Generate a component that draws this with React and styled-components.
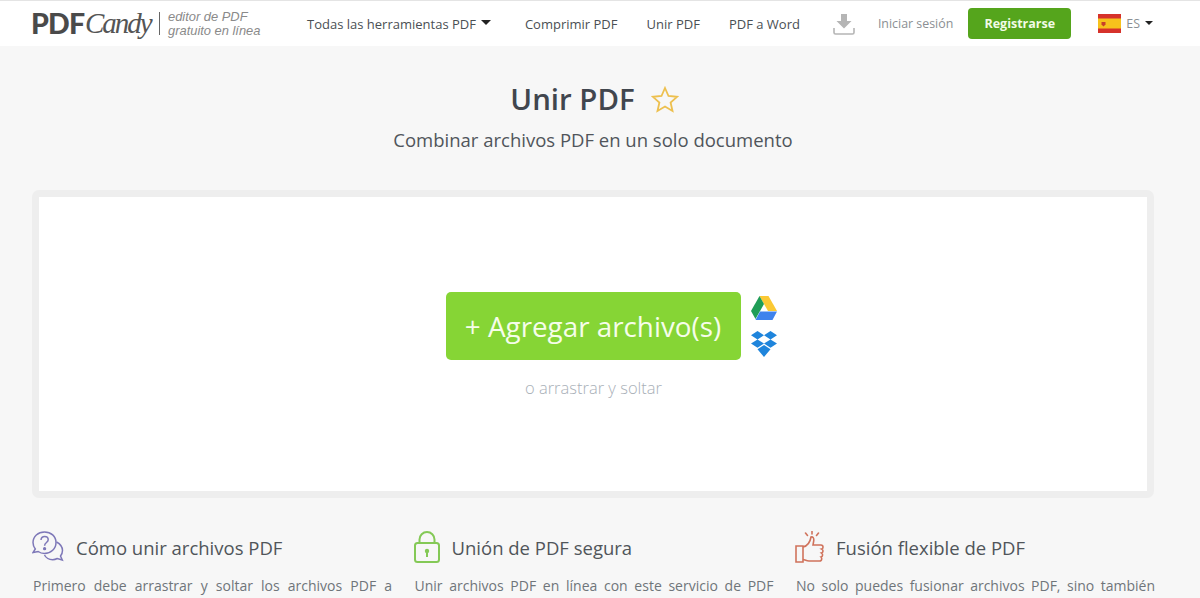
import React from "react";
import styled, { createGlobalStyle } from "styled-components";

const Global = createGlobalStyle`
  html, body { margin: 0; padding: 0; height: 598px; overflow: hidden; background: #f7f7f7; }
  body { font-family: "Open Sans", "Noto Sans", sans-serif; color: #444a50; }
`;
const Page = styled.div`width: 1200px; height: 598px; overflow: hidden;`;
const Header = styled.header`
  height: 46px; box-sizing: border-box; background: #fff; border-top: 1px solid #e4e4e4;
  display: flex; align-items: center; padding-left: 31px;
`;
const Logo = styled.div`display: flex; align-items: center; width: 276px; flex: none;`;
const LogoPdf = styled.span`font: 900 28.500px/1 Lato, sans-serif; color: #4a4a4a; letter-spacing: -0.8px; width: 53px;`;
const LogoCandy = styled.span`font: italic 400 29px/1 "Liberation Serif", serif; color: #555; width: 67px; letter-spacing: -2px; margin-left: 1px;`;
const LogoSep = styled.span`width: 1px; height: 23px; background: #666; margin: 0 8px 0 7px;`;
const Tagline = styled.div`font: italic 12.900px/13.500px "Liberation Sans", sans-serif; color: #8a8a8a; white-space: nowrap;`;
const NavLink = styled.a`
  font-size: ${p => p.$muted ? 12.4 : 13}px; color: ${p => p.$muted ? "#8b8f93" : "#4a4f54"}; white-space: nowrap;
  margin-left: ${p => p.$gap}px; display: flex; align-items: center;
`;
const Caret = styled.i`
  display: inline-block; width: 0; height: 0; margin-left: 5px; margin-top: -2px;
  border-left: ${p => p.$s}px solid transparent; border-right: ${p => p.$s}px solid transparent;
  border-top: ${p => p.$s}px solid #222;
`;
const IconSlot = styled.span`display: flex; margin-left: ${p => p.$gap}px;`;
const Register = styled.a`
  margin-left: 15px; width: 103px; height: 31px; border-radius: 4px; background: #55a51c; color: #f2fbe6;
  font-size: 12.5px; font-weight: 700; display: flex; align-items: center; justify-content: center;
`;
const Main = styled.main`padding: 0 46px 0 32px; width: 1122px;`;
const TitleRow = styled.div`
  display: flex; justify-content: center; align-items: center; gap: 16px; padding: 30px 0 0 3px;
`;
const Title = styled.h1`margin: 0; font-size: 29.400px; line-height: 46px; font-weight: 600; color: #41464e;`;
const Subtitle = styled.p`margin: 6px 0 0; text-align: center; font-size: 18.500px; line-height: 24px; color: #50555b;`;
const Drop = styled.section`
  margin-top: 38px; border: 7px solid #eeeeee; border-radius: 7px; background: #fff;
  display: flex; flex-direction: column; align-items: center; padding-top: 95px; height: 199px;
`;
const ButtonRow = styled.div`display: flex; align-items: center; gap: 10px; margin-left: 36px;`;
const AddButton = styled.button`
  width: 295px; height: 68px; border: 0; border-radius: 5px; background: #86d535; color: #f6fdea;
  font: 400 27.800px "Open Sans", sans-serif; padding: 0;
`;
const Clouds = styled.div`display: flex; flex-direction: column; gap: 11px; width: 26px;`;
const Hint = styled.div`margin-top: 17px; font-size: 16.500px; font-weight: 300; line-height: 22px; color: #a9b0b8; margin-left: 1px;`;
const Columns = styled.div`display: grid; grid-template-columns: 360px 360px 360px; column-gap: 21.500px; margin-top: 31px;`;
const ColHead = styled.div`display: flex; align-items: center; height: 36px;`;
const ColIcon = styled.span`display: flex; width: ${p => p.$w}px; flex: none;`;
const ColTitle = styled.h2`margin: 0; font-size: 18.500px; font-weight: 400; color: #50555a; white-space: nowrap;`;
const ColText = styled.p`
  margin: 10px 0 0; padding-left: 1px; font-size: 14px; line-height: 22px; color: #6f757a; text-align: justify; text-align-last: justify;
`;

const Download = () => (
  <svg width="22" height="22" viewBox="0 0 22 22">
    <path d="M8 1h6v7h4.500L11 15.500 3.500 8H8z" fill="#b5b5b5" />
    <path d="M1 15v4.500a1.500 1.500 0 0 0 1.500 1.500h17a1.500 1.500 0 0 0 1.500-1.500V15" fill="none" stroke="#b5b5b5" strokeWidth="1.600" />
  </svg>
);
const Flag = () => (
  <svg width="23" height="19" viewBox="0 0 23 19">
    <rect width="23" height="19" fill="#d6322b" />
    <rect y="4.500" width="23" height="10" fill="#f7c21c" />
    <path d="M3.500 8h4v2.500l-2 2-2-2z" fill="#c8402a" />
  </svg>
);
const Star = () => (
  <svg width="28" height="27" viewBox="0 0 28 27">
    <path d="M14 2l3.500 8 8.500.8-6.400 5.700 1.900 8.500L14 20.500 6.500 25l1.900-8.500L2 10.800l8.500-.8z" fill="none" stroke="#edc04f" strokeWidth="1.800" strokeLinejoin="miter" />
  </svg>
);
const Drive = () => (
  <svg width="26" height="24" viewBox="0 0 26 24" style={{ display: "block" }}>
    <path d="M8.500 0h9l8.500 15h-9z" fill="#fbc934" />
    <path d="M8.500 0L0 15l4.500 8L13 8z" fill="#1f9d57" />
    <path d="M4.500 24h17l4.500-8.500H9z" fill="#3f83ed" />
  </svg>
);
const Dropbox = () => (
  <svg width="26" height="26" viewBox="0.500 0 26 26" style={{ display: "block" }}>
    <path d="M7 0l6.500 4.200L7 8.400.5 4.200zM20 0l6.500 4.200L20 8.400l-6.500-4.200zM.5 12.600L7 8.400l6.500 4.200L7 16.800zM20 8.400l6.500 4.200L20 16.800l-6.500-4.200zM7 18.300l6.500-4.200 6.500 4.200-6.500 7.700z" fill="#1f85dc" />
  </svg>
);
const Question = () => (
  <svg width="32" height="32" viewBox="0 0 32 32" fill="none" stroke="#7e78b8" strokeWidth="1.500">
    <path d="M12.500 1C6 1 1 5.500 1 11.500c0 2.500 1 4.800 2.300 6.500L1 21.500l5.200-1c1.800 1.300 4 2 6.300 2 6.500 0 11.500-4.800 11.500-11S19 1 12.500 1z" />
    <path d="M24.500 11c3.800 2 6 5 6 8.500 0 2.200-.8 4-2 5.500l1.800 4-5-1.500c-1.500.8-3 1.200-4.700 1.200-3.500 0-6.500-1.700-8.100-4.700" />
    <path d="M9 9c.2-2.200 1.700-3.500 3.700-3.500s3.500 1.300 3.500 3.200c0 2.800-3.600 2.800-3.600 6" />
    <circle cx="12.600" cy="17.700" r=".9" fill="#7e78b8" />
  </svg>
);
const Lock = () => (
  <svg width="26" height="32" viewBox="0 0 26 32" fill="none" stroke="#84c956" strokeWidth="2">
    <rect x="1" y="12" width="24" height="19" rx="2.500" />
    <path d="M5.500 12V8.500a7.500 7.500 0 0 1 15 0V12" />
    <circle cx="13" cy="20" r="2.200" fill="#84c956" stroke="none" />
    <rect x="12" y="20" width="2" height="6" fill="#84c956" stroke="none" />
  </svg>
);
const Thumb = () => (
  <svg width="29" height="32" viewBox="0 0 29 32" fill="none" stroke="#d0735c" strokeWidth="1.600">
    <path d="M1 15h7v16H1z" />
    <path d="M8 16c4-1 7-4 8-10 2-.5 3 1 2.800 3.500L18 14h8a2 2 0 0 1 2 2.200c0 1-.6 1.600-1.400 1.800.8.400 1.400 1 1.400 2s-.6 1.800-1.500 2c.7.500 1.100 1.100 1.100 2s-.7 1.800-1.600 2c.5.500.7 1 .7 1.700 0 1.300-1 2.300-2.200 2.300H14c-2 0-4-1-6-1.500" />
    <path d="M17 0v3M10.500 2l2 2.500M23.500 2l-2 2.500" strokeLinecap="round" />
  </svg>
);

const features = [
  { w: 44, icon: <Question />, title: "Cómo unir archivos PDF", text: "Primero debe arrastrar y soltar los archivos PDF a" },
  { w: 38, icon: <Lock />, title: "Unión de PDF segura", text: "Unir archivos PDF en línea con este servicio de PDF" },
  { w: 41, icon: <Thumb />, title: "Fusión flexible de PDF", text: "No solo puedes fusionar archivos PDF, sino también" },
];

export default function App() {
  return (
    <Page>
      <Global />
      <Header>
        <Logo>
          <LogoPdf>PDF</LogoPdf>
          <LogoCandy>Candy</LogoCandy>
          <LogoSep />
          <Tagline>editor de PDF<br />gratuito en línea</Tagline>
        </Logo>
        <NavLink>Todas las herramientas PDF<Caret $s={5} /></NavLink>
        <NavLink $gap={34}>Comprimir PDF</NavLink>
        <NavLink $gap={29}>Unir PDF</NavLink>
        <NavLink $gap={29}>PDF a Word</NavLink>
        <IconSlot $gap={33}><Download /></IconSlot>
        <NavLink $gap={23} $muted>Iniciar sesión</NavLink>
        <Register>Registrarse</Register>
        <IconSlot $gap={27}><Flag /></IconSlot>
        <NavLink $gap={5} $muted>ES<Caret $s={4} /></NavLink>
      </Header>
      <Main>
        <TitleRow>
          <Title>Unir PDF</Title>
          <Star />
        </TitleRow>
        <Subtitle>Combinar archivos PDF en un solo documento</Subtitle>
        <Drop>
          <ButtonRow>
            <AddButton>+ Agregar archivo(s)</AddButton>
            <Clouds><Drive /><Dropbox /></Clouds>
          </ButtonRow>
          <Hint>o arrastrar y soltar</Hint>
        </Drop>
        <Columns>
          {features.map(f => (
            <div key={f.title}>
              <ColHead>
                <ColIcon $w={f.w}>{f.icon}</ColIcon>
                <ColTitle>{f.title}</ColTitle>
              </ColHead>
              <ColText>{f.text}</ColText>
            </div>
          ))}
        </Columns>
      </Main>
    </Page>
  );
}
